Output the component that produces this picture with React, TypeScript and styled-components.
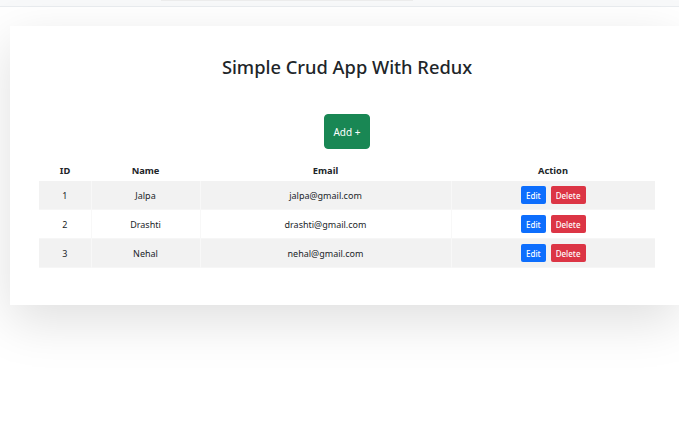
import React from 'react'
import styled, { createGlobalStyle } from 'styled-components'

interface iUser {
    id: number
    name: string
    email: string
}

const users: iUser[] = [
    { id: 1, name: 'Jalpa', email: 'jalpa@gmail.com' },
    { id: 2, name: 'Drashti', email: 'drashti@gmail.com' },
    { id: 3, name: 'Nehal', email: 'nehal@gmail.com' },
]

const GlobalStyle = createGlobalStyle`
  body {
    margin: 0;
    background: #fff;
    font-family: "Noto Sans", "Open Sans", sans-serif;
    color: #212529;
  }
  `

const Page = styled.div`
  min-height: 424px;
  padding-bottom: 60px;
  box-sizing: border-box;
  `

const TopBar = styled.div`
  height: 6px;
  background: #f8f9fa;
  border-bottom: 1px solid #e9ecef;
  display: flex;
  justify-content: center;
  `
const TopBarField = styled.div`
  width: 252px;
  height: 1px;
  margin-right: 106px;
  background: #ececec;
  `

const Card = styled.div`
  width: 669px;
  margin: 19px 0 0 10px;
  padding: 29px 24px 37px 29px;
  box-sizing: border-box;
  background: #fff;
  box-shadow: 0 1rem 3rem rgba(0, 0, 0, 0.13);
  `

const Title = styled.h2`
  margin: 0;
  text-align: center;
  font-size: 18.3px;
  font-weight: 500;
  line-height: 24px;
  color: #212529;
  `

const Toolbar = styled.div`
  display: flex;
  justify-content: center;
  margin: 35px 0 11px;
  `

const AddButton = styled.button`
  width: 46px;
  height: 35px;
  padding: 0;
  border: 1px solid #198754;
  border-radius: 4px;
  background: #198754;
  color: #fff;
  font-family: inherit;
  font-size: 10px;
  `

const Table = styled.table`
  width: 616px;
  border-collapse: collapse;
  font-size: 9px;
  text-align: center;
  `

const HeadCell = styled.th`
  height: 21px;
  padding: 0;
  font-weight: 700;
  font-size: 9.3px;
  `

const Row = styled.tr<{ striped?: boolean }>`
  background: ${({ striped }) => striped ? '#f2f2f2' : '#fff'};
  border-bottom: 1px solid #f6f6f6;
  `

const Cell = styled.td`
  height: 28px;
  padding: 0;
  border-left: 1px solid #f8f8f8;
  &:first-child {
    border-left: none;
  }
  `

const Actions = styled.div`
  display: flex;
  justify-content: center;
  gap: 5px;
  `

const SmallButton = styled.button<{ variant: 'edit' | 'delete' }>`
  height: 18px;
  padding: 0 5px;
  border: none;
  border-radius: 2px;
  background: ${({ variant }) => variant === 'edit' ? '#0d6efd' : '#dc3545'};
  color: #fff;
  font-family: inherit;
  font-size: 8px;
  font-weight: 500;
  `

export default function App() {
    return <Page>
        <GlobalStyle />
        <TopBar><TopBarField /></TopBar>
        <Card>
            <Title>Simple Crud App With Redux</Title>
            <Toolbar>
                <AddButton>Add +</AddButton>
            </Toolbar>
            <Table>
                <thead>
                    <tr>
                        <HeadCell style={{ width: 52 }}>ID</HeadCell>
                        <HeadCell style={{ width: 109 }}>Name</HeadCell>
                        <HeadCell style={{ width: 251 }}>Email</HeadCell>
                        <HeadCell>Action</HeadCell>
                    </tr>
                </thead>
                <tbody>
                    {users.map((u, i) =>
                        <Row key={u.id} striped={i % 2 === 0}>
                            <Cell>{u.id}</Cell>
                            <Cell>{u.name}</Cell>
                            <Cell>{u.email}</Cell>
                            <Cell>
                                <Actions>
                                    <SmallButton variant="edit">Edit</SmallButton>
                                    <SmallButton variant="delete">Delete</SmallButton>
                                </Actions>
                            </Cell>
                        </Row>
                    )}
                </tbody>
            </Table>
        </Card>
    </Page>
}
